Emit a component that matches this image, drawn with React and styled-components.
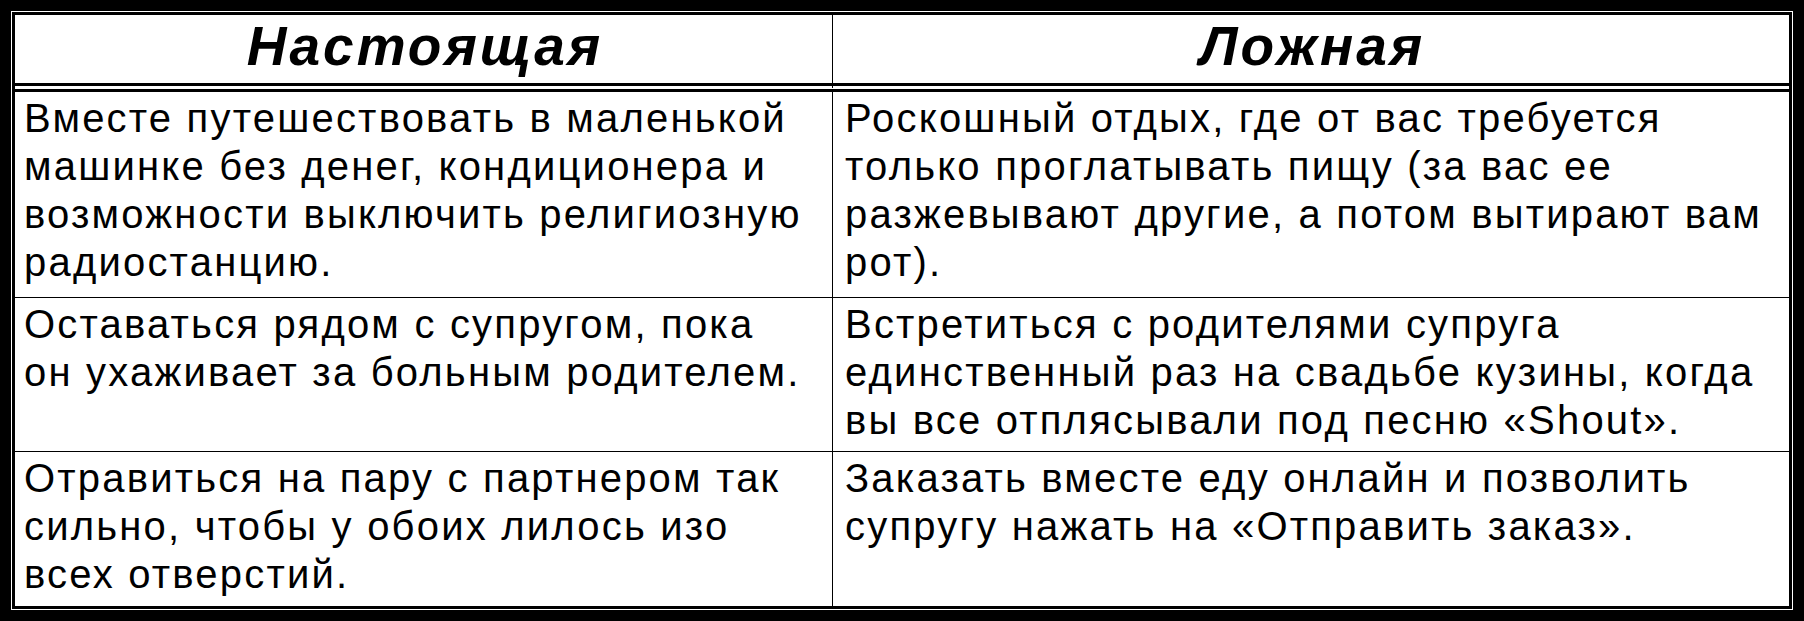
import React from "react";
import styled, { createGlobalStyle } from "styled-components";

const GlobalStyle = createGlobalStyle`
    html, body {
        margin: 0;
        padding: 0;
        background: #fff;
    }
    * {
        box-sizing: border-box;
    }
`;

const Frame = styled.div`
    width: 1804px;
    height: 621px;
    border: 11px solid #000;
    background: #fff;
    padding: 1px;
    font-family: "Liberation Sans", Arial, sans-serif;
    color: #000;
`;

const Table = styled.div`
    height: 100%;
    border: 3px solid #000;
    display: grid;
    grid-template-columns: 818px 1fr;
    grid-template-rows: 77px 206px 154px 154px;
`;

const HeadCell = styled.div`
    border-bottom: 9px double #000;
    border-right: ${(p) => (p.$last ? "none" : "1px solid #000")};
    display: flex;
    align-items: flex-start;
    justify-content: center;
    font-size: 55px;
    font-weight: bold;
    font-style: italic;
    letter-spacing: 3px;
    line-height: 62px;
    padding-left: 3px;
`;

const Cell = styled.div`
    border-bottom: ${(p) => (p.$bottom ? "none" : "1px solid #000")};
    border-right: ${(p) => (p.$last ? "none" : "1px solid #000")};
    padding: 2px 8px 0 ${(p) => (p.$last ? "12px" : "9px")};
    font-size: 40px;
    letter-spacing: 2.2px;
    line-height: 48px;
    white-space: nowrap;
`;

const Line = styled.div``;

const rows = [
    {
        real: [
            "Вместе путешествовать в маленькой",
            "машинке без денег, кондиционера и",
            "возможности выключить религиозную",
            "радиостанцию.",
        ],
        fake: [
            "Роскошный отдых, где от вас требуется",
            "только проглатывать пищу (за вас ее",
            "разжевывают другие, а потом вытирают вам",
            "рот).",
        ],
    },
    {
        real: [
            "Оставаться рядом с супругом, пока",
            "он ухаживает за больным родителем.",
        ],
        fake: [
            "Встретиться с родителями супруга",
            "единственный раз на свадьбе кузины, когда",
            "вы все отплясывали под песню «Shout».",
        ],
    },
    {
        real: [
            "Отравиться на пару с партнером так",
            "сильно, чтобы у обоих лилось изо",
            "всех отверстий.",
        ],
        fake: [
            "Заказать вместе еду онлайн и позволить",
            "супругу нажать на «Отправить заказ».",
        ],
    },
];

const App = () => {
    return (
        <>
            <GlobalStyle />
            <Frame>
                <Table>
                    <HeadCell>Настоящая</HeadCell>
                    <HeadCell $last>Ложная</HeadCell>
                    {rows.map((row, i) => (
                        <React.Fragment key={i}>
                            <Cell $bottom={i === rows.length - 1}>
                                {row.real.map((t) => (
                                    <Line key={t}>{t}</Line>
                                ))}
                            </Cell>
                            <Cell $last $bottom={i === rows.length - 1}>
                                {row.fake.map((t) => (
                                    <Line key={t}>{t}</Line>
                                ))}
                            </Cell>
                        </React.Fragment>
                    ))}
                </Table>
            </Frame>
        </>
    );
};

export default App;
